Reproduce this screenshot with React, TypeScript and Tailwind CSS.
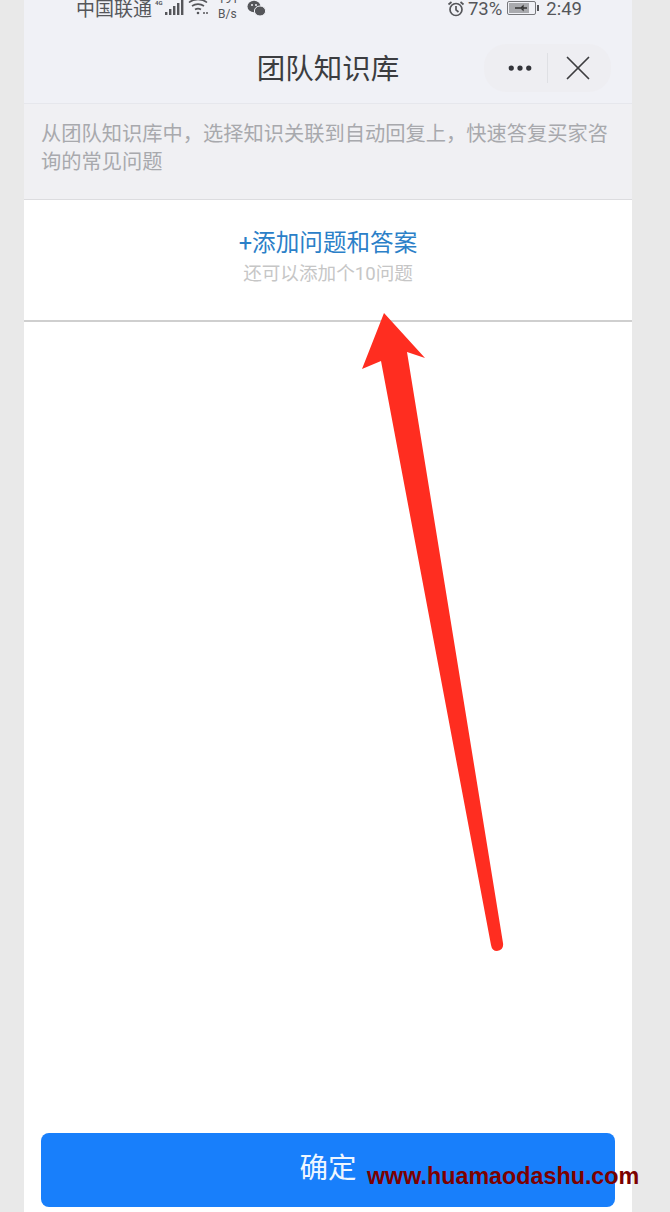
import { Ellipsis, X } from "lucide-react";

const cjk = "font-['Roboto','Noto_Sans_CJK_SC',sans-serif]";

function SignalIcon() {
  return (
    <svg width="20" height="16" viewBox="0 0 20 16" fill="#55565a">
      <rect x="1" y="12" width="2.4" height="3" />
      <rect x="5" y="9" width="2.4" height="6" />
      <rect x="9" y="6" width="2.4" height="9" />
      <rect x="13" y="3" width="2.4" height="12" />
      <rect x="17" y="0" width="2.4" height="15" />
    </svg>
  );
}

function WifiIcon() {
  return (
    <svg width="22" height="16" viewBox="0 0 22 16" fill="none" stroke="#55565a" strokeWidth="1.6">
      <path d="M1 2.5 C6 -1.5 14 -1.5 19 2.5" />
      <path d="M4 6 C7.5 3.5 12.5 3.5 16 6" />
      <path d="M7 9.5 C9 8.3 11 8.3 13 9.5" />
      <circle cx="10" cy="13" r="1.3" fill="#55565a" stroke="none" />
      <path d="M15 13 h6" strokeDasharray="2 1" />
    </svg>
  );
}

function WechatIcon() {
  return (
    <svg width="19" height="17" viewBox="0 0 19 17" fill="#55565a">
      <ellipse cx="7" cy="6.5" rx="6.5" ry="5.8" />
      <ellipse cx="13" cy="11" rx="5.6" ry="5" stroke="#f0f1f6" strokeWidth="1" />
      <circle cx="5" cy="5" r="1" fill="#f0f1f6" />
      <circle cx="9" cy="5" r="1" fill="#f0f1f6" />
    </svg>
  );
}

function AlarmIcon() {
  return (
    <svg width="18" height="16" viewBox="0 0 18 16" fill="none" stroke="#55565a" strokeWidth="1.7">
      <circle cx="9" cy="8.5" r="6" />
      <path d="M9 5 V8.8 L11.5 11" />
      <path d="M1.5 3.5 L4.5 1 M16.5 3.5 L13.5 1" />
    </svg>
  );
}

function BatteryIcon() {
  return (
    <svg width="33" height="16" viewBox="0 0 33 16">
      <rect x="0.5" y="1.5" width="28" height="13" rx="1.5" fill="none" stroke="#77787c" />
      <rect x="2" y="3" width="20" height="10" fill="#a9aaae" />
      <path d="M8 8 h6 l2 -2 v2 h4 M16 8 v2 l-2 -2" stroke="#333" strokeWidth="1.3" fill="none" />
      <rect x="30" y="5" width="2" height="6" fill="#55565a" />
    </svg>
  );
}

function Arrow() {
  return (
    <svg className="absolute left-0 top-0" width="670" height="1212" viewBox="0 0 670 1212">
      <path
        d="M384 313 L425 358 L407 352 L503 943 Q504 950 497 951 Q492 951 491 945 L381 361 L362 369 Z"
        fill="#ff2d20"
      />
    </svg>
  );
}

export default function App() {
  return (
    <div className={`relative h-[1212px] w-[670px] overflow-hidden bg-[#e9e9e9] ${cjk}`}>
      <div className="ml-6 flex h-full w-[608px] flex-col bg-white">
        {/* Status bar + title */}
        <div className="h-[104px] border-b border-[#e6e7ec] bg-[#f0f1f6]">
          <div className="flex h-[22px] items-end justify-between overflow-hidden pl-[52px] pr-[50px] text-[#55565a]">
            <div className="flex items-end">
              <span className="mb-[3px] text-[19px] leading-[19px]">中国联通</span>
              <span className="mb-[16px] ml-[3px] w-[9px] text-[6px] font-bold leading-[6px]">4G</span>
              <span className="mb-[6px]"><SignalIcon /></span>
              <span className="mb-[6px] ml-1"><WifiIcon /></span>
              <span className="ml-2 w-[24px] text-[12px] leading-[15px]">191 B/s</span>
              <span className="mb-[5px] ml-[5px]"><WechatIcon /></span>
            </div>
            <div className="flex items-end">
              <span className="mb-[5px]"><AlarmIcon /></span>
              <span className="mb-[3px] ml-[3px] text-[18.5px] leading-[19px]">73%</span>
              <span className="mb-[6px] ml-[5px]"><BatteryIcon /></span>
              <span className="mb-[3px] ml-[6px] text-[18.5px] leading-[19px]">2:49</span>
            </div>
          </div>
          <div className="relative mt-[24px] flex items-center justify-center">
            <h1 className="text-[28.5px] font-normal leading-[48px] text-[#3c3d40]">团队知识库</h1>
            <div className="absolute right-[21px] top-[-2px] flex h-[48px] w-[127px] items-center rounded-[22px] bg-[#eeeef2]">
              <div className="flex flex-1 justify-center pl-[9px]">
                <Ellipsis size={30} strokeWidth={2.2} color="#33343a" />
              </div>
              <div className="h-[30px] w-px bg-[#dfe0e4]" />
              <div className="flex w-[63px] justify-center pr-1">
                <X size={42} strokeWidth={1} color="#3c3d40" />
              </div>
            </div>
          </div>
        </div>

        {/* Description */}
        <div className="h-[96px] border-b border-[#dcdcdf] bg-[#f0f0f3] px-[17px] pt-[16px] text-[20.25px] leading-[28px] text-[#a8a9ad]">
          从团队知识库中，选择知识关联到自动回复上，快速答复买家咨询的常见问题
        </div>

        {/* Add question */}
        <div className="flex h-[122px] flex-col items-center border-b-2 border-[#cfcfcf] pt-[27px]">
          <div className="text-[23.6px] leading-[32px] text-[#2b80c8]">+添加问题和答案</div>
          <div className="text-[18.6px] leading-[30px] text-[#c6c6c6]">还可以添加个10问题</div>
        </div>

        {/* Confirm */}
        <div className="mt-auto px-[17px] pb-[5px]">
          <button className="flex h-[74px] w-full items-center justify-center rounded-lg bg-[#187ffb] pb-[2px] text-[28.5px] text-[#eef6ff]">
            确定
          </button>
        </div>
      </div>

      <Arrow />

      <div className="absolute left-[367px] top-[1161px] font-['Liberation_Sans',sans-serif] text-[23.3px] font-bold leading-[30px] text-[#7d0000]">
        www.huamaodashu.com
      </div>
    </div>
  );
}
